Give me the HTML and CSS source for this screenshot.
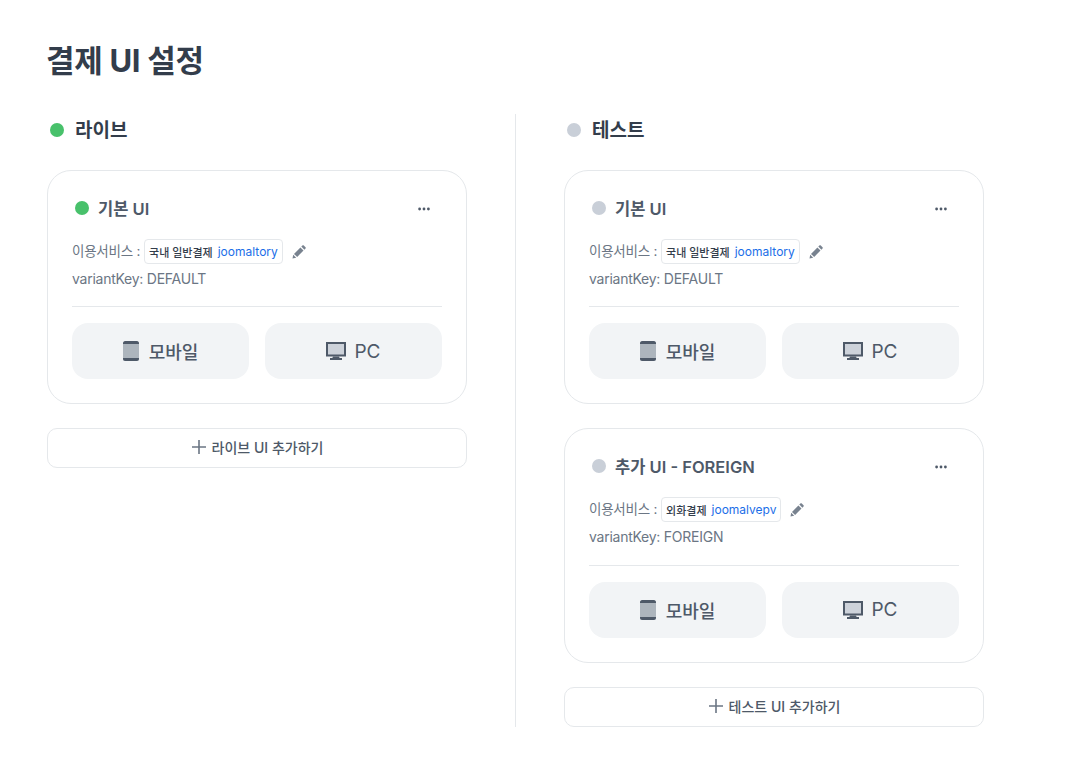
FILE: index.html
```html
<!DOCTYPE html>
<html lang="ko">

<head>
    <meta charset="UTF-8">
    <title>결제 UI 설정</title>
    <link rel="stylesheet" href="styles.css">
</head>

<body>
    <h1 class="page-title">결제 UI 설정</h1>

    <div class="columns">
        <section class="column">
            <h2 class="column-title"><span class="dot dot-live"></span><span class="label">라이브</span></h2>

            <div class="card">
                <div class="card-head">
                    <div class="card-title"><span class="dot dot-live"></span><span>기본 UI</span></div>
                    <svg class="more" width="16" height="16" viewBox="0 0 16 16"><circle cx="3.6" cy="8" r="1.4"/><circle cx="8" cy="8" r="1.4"/><circle cx="12.4" cy="8" r="1.4"/></svg>
                </div>
                <div class="service">
                    <span class="service-label">이용서비스 :</span>
                    <span class="chip"><span class="chip-name">국내 일반결제</span><span class="chip-id">joomaltory</span></span>
                    <svg class="pencil" width="16" height="16" viewBox="0 0 16 16"><path d="M1.500 14.500l.7-3.700 3 3zM3 9.900l6.400-6.400 3.100 3.100-6.400 6.400zM10.300 2.600l1.100-1.100c.4-.4 1-.4 1.400 0l1.700 1.700c.4.4.4 1 0 1.400l-1.100 1.100z"/></svg>
                </div>
                <div class="variant">variantKey: DEFAULT</div>
                <div class="card-buttons">
                    <button class="device">
                        <svg width="16" height="20" viewBox="0 0 16 20"><rect x="0" y="0" width="16" height="20" rx="2.5" fill="#adb5bd"/><path d="M0 3V2.5A2.5 2.5 0 0 1 2.500 0h11A2.500 2.500 0 0 1 16 2.500V3zM0 17h16v.5a2.500 2.500 0 0 1-2.500 2.500h-11A2.500 2.500 0 0 1 0 17.500z" fill="#4e5968"/></svg>
                        모바일
                    </button>
                    <button class="device device-pc">
                        <svg width="20" height="18" viewBox="0 0 20 18"><rect x="1" y="1" width="18" height="12.500" fill="#cdd2da" stroke="#4e5968" stroke-width="2"/><path d="M7 14.500h6l.6 1.500H16v2H4v-2h2.400z" fill="#4e5968"/></svg>
                        PC
                    </button>
                </div>
            </div>

            <button class="add-button"><svg width="16" height="16" viewBox="0 0 16 16"><path d="M8 1v14M1 8h14" stroke="#6b7684" stroke-width="1.6" fill="none"/></svg>라이브 UI 추가하기</button>
        </section>

        <div class="column-line"></div>

        <section class="column">
            <h2 class="column-title"><span class="dot dot-test"></span><span class="label">테스트</span></h2>

            <div class="card">
                <div class="card-head">
                    <div class="card-title"><span class="dot dot-test"></span><span>기본 UI</span></div>
                    <svg class="more" width="16" height="16" viewBox="0 0 16 16"><circle cx="3.6" cy="8" r="1.4"/><circle cx="8" cy="8" r="1.4"/><circle cx="12.4" cy="8" r="1.4"/></svg>
                </div>
                <div class="service">
                    <span class="service-label">이용서비스 :</span>
                    <span class="chip"><span class="chip-name">국내 일반결제</span><span class="chip-id">joomaltory</span></span>
                    <svg class="pencil" width="16" height="16" viewBox="0 0 16 16"><path d="M1.500 14.500l.7-3.700 3 3zM3 9.900l6.400-6.400 3.100 3.100-6.400 6.400zM10.300 2.600l1.100-1.100c.4-.4 1-.4 1.400 0l1.700 1.700c.4.4.4 1 0 1.400l-1.100 1.100z"/></svg>
                </div>
                <div class="variant">variantKey: DEFAULT</div>
                <div class="card-buttons">
                    <button class="device">
                        <svg width="16" height="20" viewBox="0 0 16 20"><rect x="0" y="0" width="16" height="20" rx="2.5" fill="#adb5bd"/><path d="M0 3V2.5A2.5 2.5 0 0 1 2.500 0h11A2.500 2.500 0 0 1 16 2.500V3zM0 17h16v.5a2.500 2.500 0 0 1-2.500 2.500h-11A2.500 2.500 0 0 1 0 17.500z" fill="#4e5968"/></svg>
                        모바일
                    </button>
                    <button class="device device-pc">
                        <svg width="20" height="18" viewBox="0 0 20 18"><rect x="1" y="1" width="18" height="12.500" fill="#cdd2da" stroke="#4e5968" stroke-width="2"/><path d="M7 14.500h6l.6 1.500H16v2H4v-2h2.400z" fill="#4e5968"/></svg>
                        PC
                    </button>
                </div>
            </div>

            <div class="card">
                <div class="card-head">
                    <div class="card-title"><span class="dot dot-test"></span><span>추가 UI - FOREIGN</span></div>
                    <svg class="more" width="16" height="16" viewBox="0 0 16 16"><circle cx="3.6" cy="8" r="1.4"/><circle cx="8" cy="8" r="1.4"/><circle cx="12.4" cy="8" r="1.4"/></svg>
                </div>
                <div class="service">
                    <span class="service-label">이용서비스 :</span>
                    <span class="chip"><span class="chip-name">외화결제</span><span class="chip-id">joomalvepv</span></span>
                    <svg class="pencil" width="16" height="16" viewBox="0 0 16 16"><path d="M1.500 14.500l.7-3.700 3 3zM3 9.900l6.400-6.400 3.100 3.100-6.400 6.400zM10.300 2.600l1.100-1.100c.4-.4 1-.4 1.400 0l1.700 1.700c.4.4.4 1 0 1.400l-1.100 1.100z"/></svg>
                </div>
                <div class="variant">variantKey: FOREIGN</div>
                <div class="card-buttons">
                    <button class="device">
                        <svg width="16" height="20" viewBox="0 0 16 20"><rect x="0" y="0" width="16" height="20" rx="2.5" fill="#adb5bd"/><path d="M0 3V2.5A2.5 2.5 0 0 1 2.500 0h11A2.500 2.500 0 0 1 16 2.500V3zM0 17h16v.5a2.500 2.500 0 0 1-2.500 2.500h-11A2.500 2.500 0 0 1 0 17.500z" fill="#4e5968"/></svg>
                        모바일
                    </button>
                    <button class="device device-pc">
                        <svg width="20" height="18" viewBox="0 0 20 18"><rect x="1" y="1" width="18" height="12.500" fill="#cdd2da" stroke="#4e5968" stroke-width="2"/><path d="M7 14.500h6l.6 1.500H16v2H4v-2h2.400z" fill="#4e5968"/></svg>
                        PC
                    </button>
                </div>
            </div>

            <button class="add-button"><svg width="16" height="16" viewBox="0 0 16 16"><path d="M8 1v14M1 8h14" stroke="#6b7684" stroke-width="1.6" fill="none"/></svg>테스트 UI 추가하기</button>
        </section>
    </div>
</body>

</html>
```

FILE: styles.css
```css
body {
    margin: 0;
    padding: 40px 47px 0;
    background: #fff;
    color: #333d4b;
    font-family: Inter, "Noto Sans CJK KR", sans-serif;
}

.page-title {
    margin: 0 0 33px -1px;
    height: 40px;
    font-size: 31px;
    line-height: 42px;
    font-weight: 700;
    letter-spacing: -0.3px;
}

.columns {
    display: flex;
    gap: 48px;
}

.column {
    width: 420px;
    display: flex;
    flex-direction: column;
    gap: 24px;
}

.column-line {
    width: 1px;
    margin-top: 1px;
    background: #e5e8eb;
}

.column-title {
    display: flex;
    align-items: center;
    gap: 11px;
    height: 33px;
    margin: 0;
    padding-left: 3px;
    font-size: 19px;
    font-weight: 600;
}

.label {
    padding-bottom: 2px;
}

.dot {
    width: 14px;
    height: 14px;
    border-radius: 50%;
    flex: none;
}

.dot-live {
    background: #48c16b;
}

.dot-test {
    background: #c9cfd8;
}

.card {
    box-sizing: border-box;
    height: 234.4px;
    padding: 24px;
    background: #fff;
    border: 1px solid #e5e8eb;
    border-radius: 24px;
}

.card-head {
    display: flex;
    align-items: center;
    justify-content: space-between;
    height: 26px;
    padding: 0 10px 0 3px;
}

.card-title {
    display: flex;
    align-items: center;
    gap: 9px;
    font-size: 16.5px;
    font-weight: 600;
    color: #4e5968;
}

.more {
    margin-top: 1px;
    fill: #4e5968;
}

.service {
    display: flex;
    align-items: center;
    gap: 4px;
    height: 25px;
    margin-top: 18px;
    font-size: 14px;
    color: #6b7684;
}

.service-label {
    padding-bottom: 3px;
    font-size: 13.5px;
    letter-spacing: -0.25px;
}

.chip {
    display: flex;
    align-items: center;
    gap: 5px;
    box-sizing: border-box;
    height: 25px;
    padding: 0 4px;
    border: 1px solid #e5e8eb;
    border-radius: 4px;
    font-size: 11px;
}

.chip-name {
    color: #333d4b;
    font-weight: 500;
}

.chip-id {
    font-size: 12px;
    color: #1b6ee8;
}

.pencil {
    margin-left: 4px;
    fill: #78828f;
}

.variant {
    margin-top: 5px;
    height: 20px;
    padding-bottom: 17.4px;
    line-height: 20px;
    font-size: 14px;
    letter-spacing: -0.25px;
    color: #6b7684;
    border-bottom: 1px solid #e5e8eb;
}

.card-buttons {
    display: flex;
    gap: 16px;
    margin-top: 16px;
}

.device {
    flex: 1;
    display: flex;
    align-items: center;
    justify-content: center;
    gap: 10px;
    height: 56px;
    border: 0;
    border-radius: 16px;
    background: #f2f4f6;
    color: #4e5968;
    font-family: inherit;
    font-size: 18px;
    font-weight: 500;
}

.device-pc {
    gap: 8px;
    font-size: 19px;
    font-weight: 400;
}

.add-button {
    display: flex;
    align-items: center;
    justify-content: center;
    gap: 5px;
    height: 40px;
    padding: 0 0 2px;
    border: 1px solid #e5e8eb;
    border-radius: 10px;
    background: #fff;
    color: #4e5968;
    font-family: inherit;
    font-size: 14px;
    font-weight: 500;
}
```
